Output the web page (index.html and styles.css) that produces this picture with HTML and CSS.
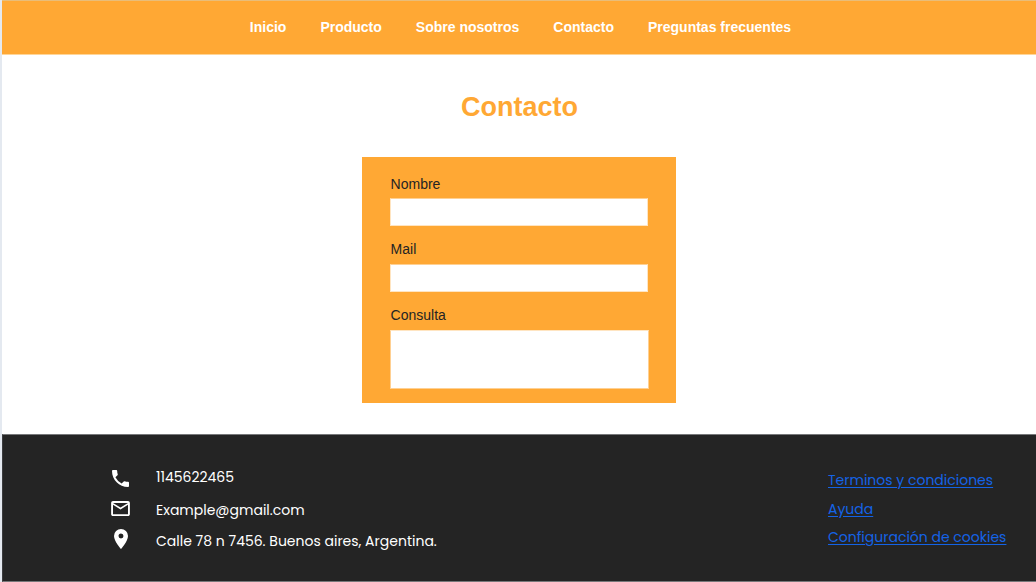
FILE: index.html
```html
<!DOCTYPE html>
<html lang="es">
<head>
<meta charset="utf-8">
<title>Contacto</title>
<link rel="stylesheet" href="styles.css">
</head>
<body>
<div class="page">
  <nav class="nav">
    <a>Inicio</a><a>Producto</a><a>Sobre nosotros</a><a>Contacto</a><a>Preguntas frecuentes</a>
  </nav>
  <main class="main">
    <h1 class="title">Contacto</h1>
    <form class="form">
      <label class="label label-first" for="nombre">Nombre</label>
      <input class="field" id="nombre" type="text">
      <label class="label" for="mail">Mail</label>
      <input class="field" id="mail" type="email">
      <label class="label" for="consulta">Consulta</label>
      <textarea class="field area" id="consulta"></textarea>
    </form>
  </main>
  <footer class="footer">
    <ul class="contact">
      <li class="phone">
        <svg class="icon" viewBox="3 3 18 18" width="17" height="17"><path d="M6.62 10.79a15.05 15.05 0 0 0 6.59 6.59l2.2-2.2a1 1 0 0 1 1.02-.24c1.12.37 2.33.57 3.57.57a1 1 0 0 1 1 1V20a1 1 0 0 1-1 1C10.61 21 3 13.39 3 4a1 1 0 0 1 1-1h3.5a1 1 0 0 1 1 1c0 1.25.2 2.45.57 3.57a1 1 0 0 1-.25 1.02z"/></svg>
        <span>1145622465</span>
      </li>
      <li class="mail">
        <svg class="icon" viewBox="2 4 20 16" width="19" height="15"><path d="M22 6c0-1.1-.9-2-2-2H4c-1.1 0-2 .9-2 2v12c0 1.1.9 2 2 2h16c1.1 0 2-.9 2-2zm-2 0-8 5-8-5zm0 12H4V8l8 5 8-5z"/></svg>
        <span>Example@gmail.com</span>
      </li>
      <li class="place">
        <svg class="icon" viewBox="5 2 14 20" width="14" height="20"><path d="M12 2a7 7 0 0 0-7 7c0 5.25 7 13 7 13s7-7.75 7-13a7 7 0 0 0-7-7m0 9.5a2.5 2.5 0 0 1 0-5 2.5 2.5 0 0 1 0 5"/></svg>
        <span>Calle 78 n 7456. Buenos aires, Argentina.</span>
      </li>
    </ul>
    <div class="links">
      <a href="#">Terminos y condiciones</a>
      <a href="#">Ayuda</a>
      <a href="#">Configuración de cookies</a>
    </div>
  </footer>
</div>
</body>
</html>
```
FILE: styles.css
```css
* { box-sizing: border-box; }
body {
  margin: 0;
  background: #fff;
  font-family: "Liberation Sans", Arial, sans-serif;
}
.page {
  display: flex;
  flex-direction: column;
  height: 582px;
  border-left: 2px solid #e4e9f0;
}
.nav {
  display: flex;
  justify-content: center;
  gap: 34px;
  height: 55px;
  padding: 18px 0 0 3px;
  background: #ffa834;
  border-top: 1px solid #e9bd79;
  border-bottom: 1px solid #ffd598;
  color: #fff;
  font-size: 14px;
  font-weight: 700;
  line-height: 16px;
}
.main {
  display: flex;
  flex-direction: column;
  align-items: center;
  height: 379px;
}
.title {
  margin: 37px 0 34px 1px;
  color: #ffa834;
  font-size: 27px;
  line-height: 31px;
}
.form {
  display: flex;
  flex-direction: column;
  width: 314px;
  height: 246px;
  padding: 19px 28px 0;
  background: #ffa834;
}
.label {
  height: 16px;
  margin-bottom: 7px;
  padding-left: 0.6px;
  color: #242424;
  font-size: 14px;
  line-height: 16px;
}
.label-first { margin-bottom: 6px; }
.field {
  display: block;
  flex: none;
  width: 258px;
  height: 28px;
  margin: 0 0 15px;
  padding: 0 6px;
  border: 1px solid #ffe5c2;
  border-top-color: #ffd092;
  border-radius: 0;
  background: #fff;
  outline: 0;
}
.area {
  width: 259px;
  height: 59px;
  margin-bottom: 0;
  border-color: #ffe5c2 #ffd092 #ffd092;
  resize: none;
}
.footer {
  display: flex;
  justify-content: space-between;
  height: 148px;
  padding: 32px 30px 0 107px;
  background: #242424;
  border: solid #77787a;
  border-width: 1px 0;
  border-left: 1px solid #3b3c3f;
  font-family: Poppins, Inter, sans-serif;
  font-size: 14px;
  line-height: 20px;
  white-space: nowrap;
}
.contact {
  margin: 0;
  padding: 0;
  list-style: none;
  color: #fff;
}
.contact li {
  display: grid;
  grid-template-columns: 20px auto;
  column-gap: 26px;
  height: 32px;
}
.icon {
  justify-self: center;
  margin-top: 3px;
  fill: #fff;
}
.mail .icon { margin-top: 2px; }
.place .icon { margin: -2px 0 0 1px; }
.mail span { padding-top: 1px; }
.links {
  display: flex;
  flex-direction: column;
  align-items: flex-start;
  width: 178px;
  padding-top: 3px;
  gap: 8.5px;
}
.links a {
  color: #1463e6;
  text-underline-offset: 2px;
}
```
